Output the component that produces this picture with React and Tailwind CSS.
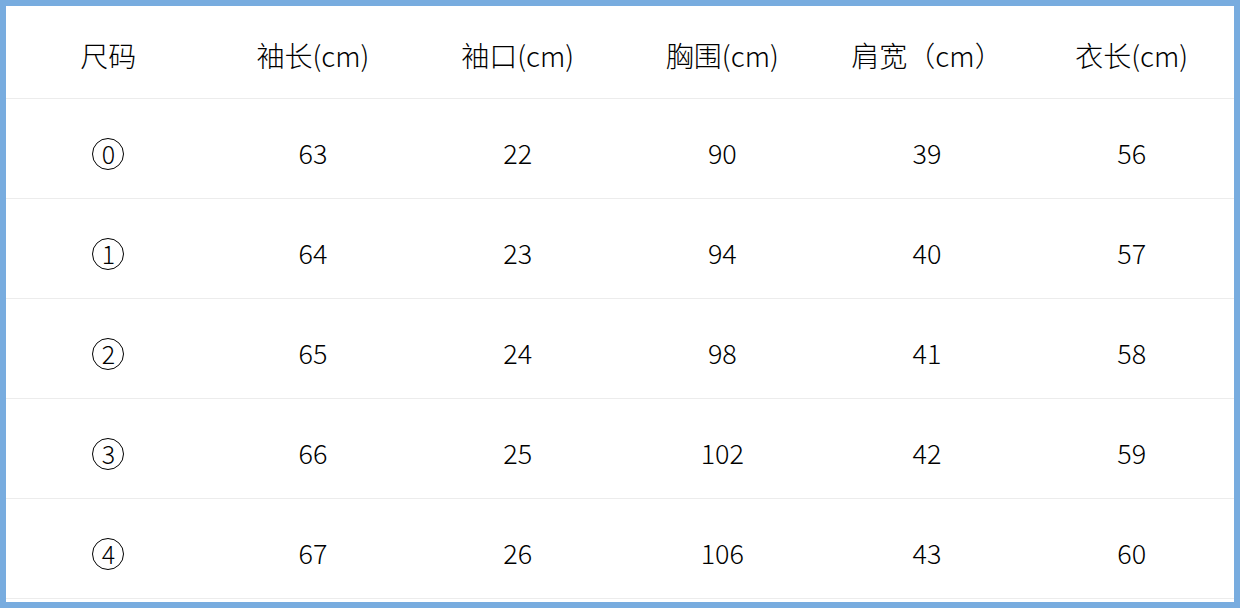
const headers = ['尺码', '袖长(cm)', '袖口(cm)', '胸围(cm)', '肩宽（cm）', '衣长(cm)']

const rows = [
  ['0', '63', '22', '90', '39', '56'],
  ['1', '64', '23', '94', '40', '57'],
  ['2', '65', '24', '98', '41', '58'],
  ['3', '66', '25', '102', '42', '59'],
  ['4', '67', '26', '106', '43', '60'],
]

// circled size number, drawn as a ring round the digit
const SizeMark = ({ n }) => (
  <span className="flex items-center justify-center w-[32px] h-[32px] rounded-full border border-black text-[25px] leading-none">
    {n}
  </span>
)

export default function App() {
  return (
    <div
      className="w-[1240px] h-[608px] bg-[#78acdf] p-[6px] overflow-hidden"
      style={{ fontFamily: '"Noto Sans CJK SC", "Liberation Sans", sans-serif' }}
    >
      <div className="h-full bg-white text-black font-light">
        {/* header */}
        <div className="grid grid-cols-6 h-[93px] border-b border-[#ececec] pt-[6px]">
          {headers.map((h) => (
            <div key={h} className="flex items-center justify-center text-[28px]">
              {h}
            </div>
          ))}
        </div>

        {/* rows */}
        {rows.map((r, i) => (
          <div key={i} className="grid grid-cols-6 h-[100px] border-b border-[#ececec] pt-[10px]">
            {r.map((c, j) => (
              <div key={j} className="flex items-center justify-center text-[27px]">
                {j === 0 ? <SizeMark n={c} /> : c}
              </div>
            ))}
          </div>
        ))}
      </div>
    </div>
  )
}
